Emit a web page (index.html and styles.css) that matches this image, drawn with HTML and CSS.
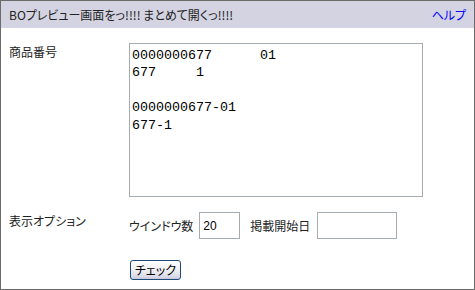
FILE: index.html
```html
<!DOCTYPE html>
<html lang="ja">
<head>
<meta charset="utf-8">
<title>BOプレビュー</title>
<link rel="stylesheet" href="styles.css">
</head>
<body>
<div class="panel">
  <div class="panel-head">
    <span class="panel-title">BOプレビュー画面をっ!!!! まとめて開くっ!!!!</span>
    <a class="help" href="#">ヘルプ</a>
  </div>
  <form class="form">
    <div class="label">商品番号</div>
    <div class="field">
      <textarea class="codes">0000000677	01
677	1

0000000677-01
677-1</textarea>
    </div>
    <div class="label">表示オプション</div>
    <div class="field options">
      <span class="opt-label">ウインドウ数</span>
      <input class="input input-sm" type="text" value="20">
      <span class="opt-label opt-gap">掲載開始日</span>
      <input class="input input-md" type="text" value="">
    </div>
    <div class="label"></div>
    <div class="field">
      <button class="btn" type="button">チェック</button>
    </div>
  </form>
</div>
</body>
</html>
```
FILE: styles.css
```css
html, body {
  margin: 0;
  padding: 0;
  background: #ffffff;
}

.panel {
  width: 475px;
  height: 290px;
  box-sizing: border-box;
  border: 1px solid #6b6b6b;
  font-family: "Noto Sans CJK JP", "Liberation Sans", sans-serif;
  font-size: 12px;
  color: #222;
  font-feature-settings: "palt";
  overflow: hidden;
}

.panel-head {
  height: 27px;
  background: #d3d3e1;
  display: flex;
  align-items: center;
  justify-content: space-between;
  padding: 0 8px 0 8px;
  line-height: 14px;
}

.panel-title {
  color: #222;
  padding-top: 1px;
}

.help {
  color: #0000ff;
  text-decoration: none;
  padding-top: 1px;
}

.form {
  display: grid;
  grid-template-columns: 120px 1fr;
  row-gap: 15px;
  padding: 15px 0 0 8px;
  margin: 0;
}

.label {
  padding-top: 2px;
  line-height: 14px;
}

.codes {
  display: block;
  width: 294px;
  height: 154px;
  box-sizing: border-box;
  margin: 0;
  border: 1px solid #a5acb2;
  padding: 3px 2px 0 2px;
  font-family: "Liberation Mono", monospace;
  font-size: 13.34px;
  line-height: 17.4px;
  color: #000;
  tab-size: 8;
  resize: none;
  overflow: hidden;
  outline: none;
}

.options {
  display: flex;
  align-items: center;
  line-height: 14px;
}

.opt-label {
  padding-top: 1px;
}

.opt-gap {
  margin-left: 10px;
}

.input {
  box-sizing: border-box;
  height: 27px;
  margin: 0 0 0 6px;
  border: 1px solid #a5acb2;
  padding: 0 3px;
  font-family: "Liberation Sans", sans-serif;
  font-size: 12px;
  color: #000;
  outline: none;
  background: #fff;
}

.input-sm {
  width: 41px;
}

.input-md {
  width: 80px;
  margin-left: 7px;
}

.btn {
  display: block;
  margin: 6px 0 0 1px;
  width: 51px;
  height: 20px;
  box-sizing: border-box;
  padding: 0;
  border: 1px solid #1c4a7a;
  border-radius: 3px;
  background: linear-gradient(#ffffff 0%, #f1f1f5 45%, #dcdcea 85%, #c8c8dc 100%);
  font-family: "Noto Sans CJK JP", sans-serif;
  font-size: 12px;
  line-height: 16px;
  color: #000;
  font-feature-settings: "palt";
}
```
